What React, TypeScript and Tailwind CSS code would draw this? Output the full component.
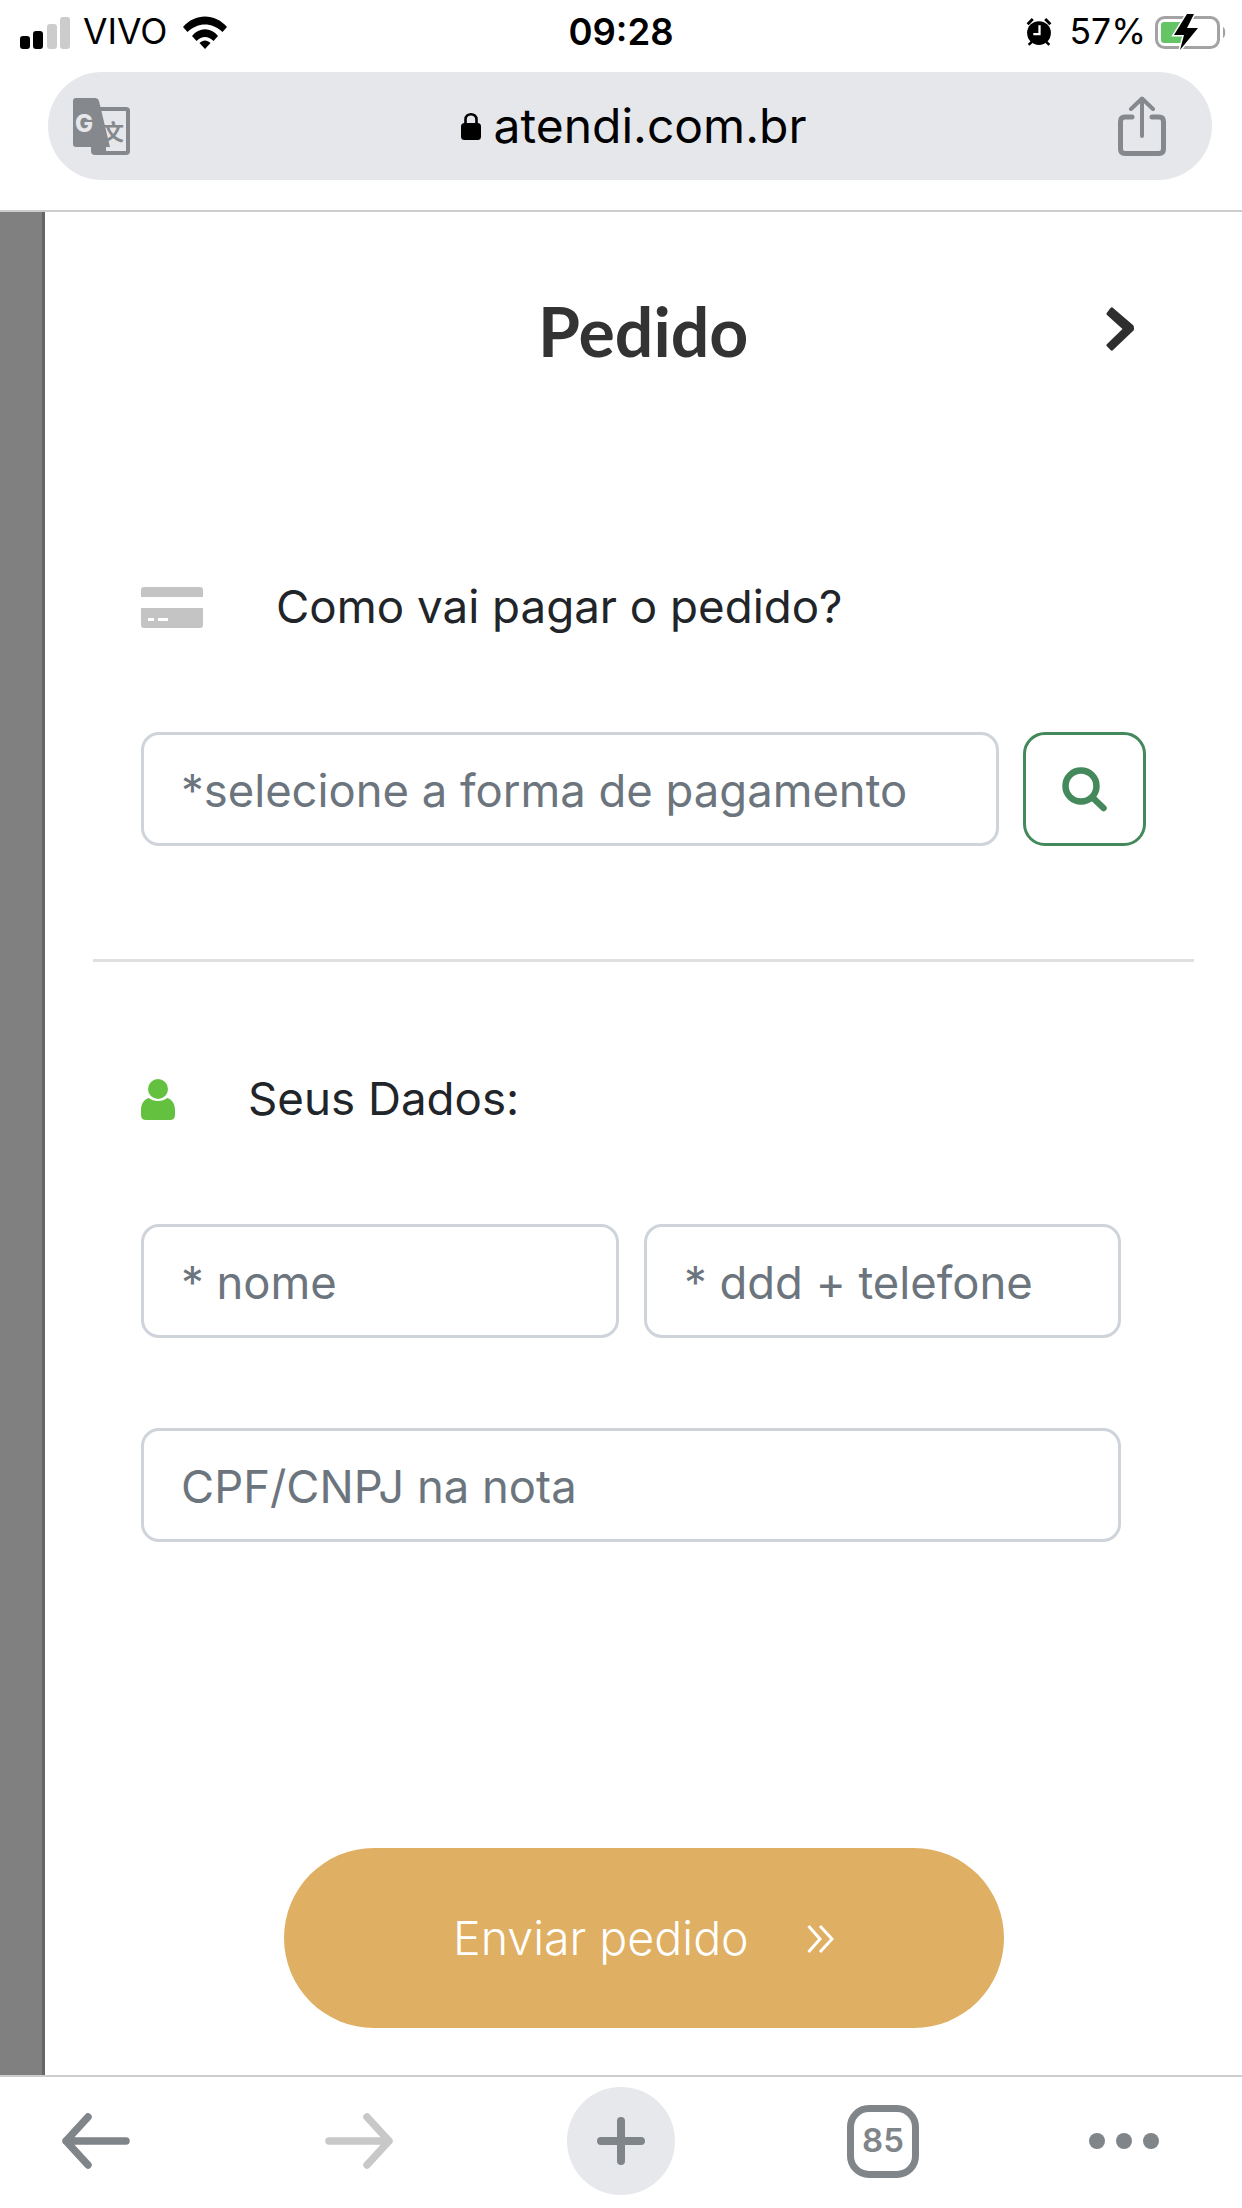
const inputCls =
  "h-[114px] min-w-0 rounded-[18px] border-[3px] border-[#ced4da] bg-white pl-[37px] pr-[10px] pt-[3px] text-[45.4px] text-[#495057] outline-none placeholder:text-[#6c757d] placeholder:opacity-100";

function Signal() {
  return (
    <svg width="50" height="33" viewBox="0 0 50 33">
      <rect x="0" y="20" width="10" height="13" rx="3" fill="#000" />
      <rect x="13" y="15" width="10" height="18" rx="3" fill="#000" />
      <rect x="27" y="8" width="10" height="25" rx="3" fill="#ccc" />
      <rect x="40" y="1" width="10" height="32" rx="3" fill="#ccc" />
    </svg>
  );
}

function Wifi() {
  return (
    <svg width="44" height="33" viewBox="0 0 44 33">
      <path d="M0 11 C12 -3 32 -3 44 11 L39.500 16 C29 6 15 6 4.500 16 Z" fill="#000" />
      <path d="M9 20 C16 11 28 11 35 20 L30.500 25 C25 19.500 19 19.500 13.500 25 Z" fill="#000" />
      <path d="M16.500 27 C20 23.500 24 23.500 27.500 27 L22 33 Z" fill="#000" />
    </svg>
  );
}

function Alarm() {
  return (
    <svg width="28" height="30" viewBox="0 0 26 29">
      <circle cx="13" cy="15.500" r="11.500" fill="#000" />
      <path d="M1 6 L6 1 L8 3 L3 8 Z M25 6 L20 1 L18 3 L23 8 Z" fill="#000" />
      <path d="M3 27 L6 24 M23 27 L20 24" stroke="#000" strokeWidth="2.500" />
      <path d="M13.500 8 V16.500 H7.500" stroke="#fff" strokeWidth="2.200" fill="none" />
    </svg>
  );
}

function Battery() {
  return (
    <svg width="73" height="36" viewBox="0 0 73 36">
      <rect x="1.500" y="3.500" width="62" height="30" rx="8" fill="none" stroke="#a3a3a3" strokeWidth="3" />
      <rect x="6" y="8" width="23" height="21" rx="3" fill="#65c466" />
      <path d="M68 13 C71 14 71 23 68 24 Z" fill="#a3a3a3" />
      <path d="M32 0 L19 21 L29 21 L25 36 L43 14 L32 14 L39 0 Z" fill="#000" stroke="#fff" strokeWidth="3" paintOrder="stroke" />
    </svg>
  );
}

function Lock() {
  return (
    <svg width="20" height="28" viewBox="0 0 20 28">
      <path d="M4.500 13 V7.500 C4.500 0.500 15.500 0.500 15.500 7.500 V13" fill="none" stroke="#000" strokeWidth="2.600" />
      <rect x="0" y="11" width="20" height="17" rx="3.500" fill="#000" />
    </svg>
  );
}

function Translate() {
  return (
    <svg width="57" height="57" viewBox="0 0 57 57" className="shrink-0">
      <rect x="18" y="9" width="39" height="48" rx="4" fill="#85898d" />
      <rect x="22" y="13" width="31" height="35" fill="#e6e7eb" />
      <rect x="33" y="48" width="20" height="5" fill="#e6e7eb" />
      <path d="M3 0 H22 Q25 0 26 3 L37 49 H3 Q0 49 0 46 V3 Q0 0 3 0 Z" fill="#85898d" />
      <text x="2" y="34" fontFamily="Inter, sans-serif" fontWeight="800" fontSize="24" fill="#e6e7eb">G</text>
      <text x="29" y="42" fontFamily="'Noto Sans CJK SC', sans-serif" fontWeight="700" fontSize="22" fill="#85898d">文</text>
    </svg>
  );
}

function Share() {
  return (
    <svg width="48" height="60" viewBox="0 0 48 60" fill="none" stroke="#85888c" strokeLinecap="round" strokeLinejoin="round">
      <path d="M14 21 H7 Q2.500 21 2.500 25.500 V53 Q2.500 57.500 7 57.500 H41 Q45.500 57.500 45.500 53 V25.500 Q45.500 21 41 21 H34" strokeWidth="5" />
      <path d="M24 40 V3 M13 13 L24 2.500 L35 13" strokeWidth="4" />
    </svg>
  );
}

function Chevron() {
  return (
    <svg width="28" height="44" viewBox="0 0 28 44" className="mb-[4px]">
      <path d="M6.500 0.500 L27.500 18.500 Q28.500 22 27.500 23.500 L6.500 43.500 Q5.500 44 4.500 43 L0.700 39 Q0 38 1 37 L16.500 22 L1 8 Q0 7 0.700 6 L4.500 1 Q5.500 0 6.500 0.500 Z" fill="#2e2e2e" />
    </svg>
  );
}

function CardIcon() {
  return (
    <svg width="62" height="41" viewBox="0 0 62 41" className="shrink-0">
      <path d="M0 10 V3 Q0 0 3 0 H59 Q62 0 62 3 V10 Z" fill="#c4c4c4" />
      <path d="M0 21 H62 V38 Q62 41 59 41 H3 Q0 41 0 38 Z" fill="#c4c4c4" />
      <rect x="7" y="31" width="6" height="3" fill="#fff" />
      <rect x="17" y="31" width="10" height="3" fill="#fff" />
    </svg>
  );
}

function UserIcon() {
  return (
    <svg width="34" height="41" viewBox="0 0 34 41" className="shrink-0 mb-[2px]">
      <circle cx="17" cy="10" r="10" fill="#64c140" />
      <path d="M8 19 C12 23 22 23 26 19 C31 20 34 25 34 31 V36 Q34 41 29 41 H5 Q0 41 0 36 V31 C0 25 3 20 8 19 Z" fill="#64c140" />
    </svg>
  );
}

function SearchIcon() {
  return (
    <svg width="45" height="45" viewBox="0 0 45 45" fill="none" stroke="#44895b" strokeLinecap="round">
      <circle cx="19" cy="19" r="15.500" strokeWidth="6.500" />
      <path d="M31 31 L41.500 41" strokeWidth="6.500" />
    </svg>
  );
}

function NavArrow({ color, flip }: { color: string; flip?: boolean }) {
  return (
    <svg width="68" height="56" viewBox="0 0 68 56" fill="none" stroke={color} strokeWidth="7.500" strokeLinecap="round" strokeLinejoin="round" className={flip ? "-scale-x-100" : ""}>
      <path d="M4 28 H64 M26 4 L4 28 L26 52" />
    </svg>
  );
}

export default function App() {
  return (
    <div className="flex h-[2208px] w-[1242px] flex-col overflow-hidden bg-white font-['Inter',sans-serif]">
      <header className="h-[212px] shrink-0 border-b-2 border-[#cdcdcd]">
        <div className="grid h-[72px] grid-cols-[1fr_auto_1fr] items-center pb-[8px] pl-[14px] pr-[14px] text-[35.5px] text-black">
          <div className="flex items-center pl-[6px]">
            <Signal />
            <span className="ml-[13px] leading-none">VIVO</span>
            <span className="ml-[16px] flex"><Wifi /></span>
          </div>
          <span className="text-[36.5px] font-semibold leading-none">09:28</span>
          <div className="flex items-center justify-end">
            <Alarm />
            <span className="ml-[16px] leading-none">57%</span>
            <span className="ml-[9px] flex"><Battery /></span>
          </div>
        </div>
        <div className="ml-[48px] mr-[30px] flex h-[108px] items-center rounded-[54px] bg-[#e6e7eb] pl-[25px] pr-[46px]">
          <Translate />
          <div className="flex flex-1 items-center justify-center gap-[13px] pl-[19px]">
            <Lock />
            <span className="text-[48px] leading-none text-black">atendi.com.br</span>
          </div>
          <Share />
        </div>
      </header>

      <div className="flex flex-1">
        <div className="w-[45px] shrink-0 border-r-[3px] border-[#666] bg-[#808080]" />
        <main className="flex-1">
          <div className="mt-[75px] flex h-[88px] items-center justify-between pl-[493px] pr-[108px]">
            <h1 className="font-['Lato',sans-serif] text-[68px] font-bold leading-none text-[#333]">Pedido</h1>
            <Chevron />
          </div>

          <div className="mt-[202px] flex h-[60px] items-center gap-[73px] pl-[96px]">
            <CardIcon />
            <span className="text-[45.7px] text-[#212529]">Como vai pagar o pedido?</span>
          </div>

          <div className="mt-[95px] flex gap-[24px] pl-[96px]">
            <input className={`${inputCls} w-[858px]`} placeholder="*selecione a forma de pagamento" />
            <button className="flex h-[114px] w-[123px] items-center justify-center rounded-[22px] border-[3px] border-[#44895b] bg-white">
              <SearchIcon />
            </button>
          </div>

          <div className="mx-[48px] mt-[113px] h-[3px] bg-[#dee0e2]" />

          <div className="mt-[108px] flex h-[60px] items-center gap-[73px] pl-[96px]">
            <UserIcon />
            <span className="pb-[2px] text-[45.7px] text-[#212529]">Seus Dados:</span>
          </div>

          <div className="mt-[94px] flex gap-[25px] pl-[96px]">
            <input className={`${inputCls} w-[478px]`} placeholder="* nome" />
            <input className={`${inputCls} w-[477px]`} placeholder="* ddd + telefone" />
          </div>

          <div className="mt-[90px] pl-[96px]">
            <input className={`${inputCls} w-[980px]`} placeholder="CPF/CNPJ na nota" />
          </div>

          <div className="ml-[239px] mt-[306px] flex h-[180px] w-[720px] items-center rounded-[90px] bg-[#dfaf63] pl-[169px] text-white">
            <span className="text-[46.5px] font-light leading-none">Enviar pedido</span>
            <svg width="27" height="28" viewBox="0 0 27 28" fill="none" stroke="#fff" strokeWidth="3" className="ml-[58px] mt-[2px]">
              <path d="M1.500 1 L13 14 L1.500 27 M13 1 L25 14 L13 27" />
            </svg>
          </div>
        </main>
      </div>

      <nav className="flex h-[133px] shrink-0 items-center border-t-2 border-[#cdcdcd] pb-[3px] pl-[62px]">
        <NavArrow color="#80858a" />
        <span className="ml-[195px] flex"><NavArrow color="#c8c8c8" flip /></span>
        <div className="ml-[174px] flex h-[108px] w-[108px] items-center justify-center rounded-full bg-[#e7e8ec]">
          <svg width="48" height="48" viewBox="0 0 48 48" stroke="#80858a" strokeWidth="8" strokeLinecap="round">
            <path d="M24 4 V44 M4 24 H44" />
          </svg>
        </div>
        <div className="ml-[172px] flex h-[73px] w-[72px] items-center justify-center rounded-[22px] border-[7px] border-[#80858a] text-[33px] font-semibold text-[#80858a]">
          85
        </div>
        <div className="ml-[170px] flex gap-[11px]">
          <span className="h-[16px] w-[16px] rounded-full bg-[#80858a]" />
          <span className="h-[16px] w-[16px] rounded-full bg-[#80858a]" />
          <span className="h-[16px] w-[16px] rounded-full bg-[#80858a]" />
        </div>
      </nav>
    </div>
  );
}
